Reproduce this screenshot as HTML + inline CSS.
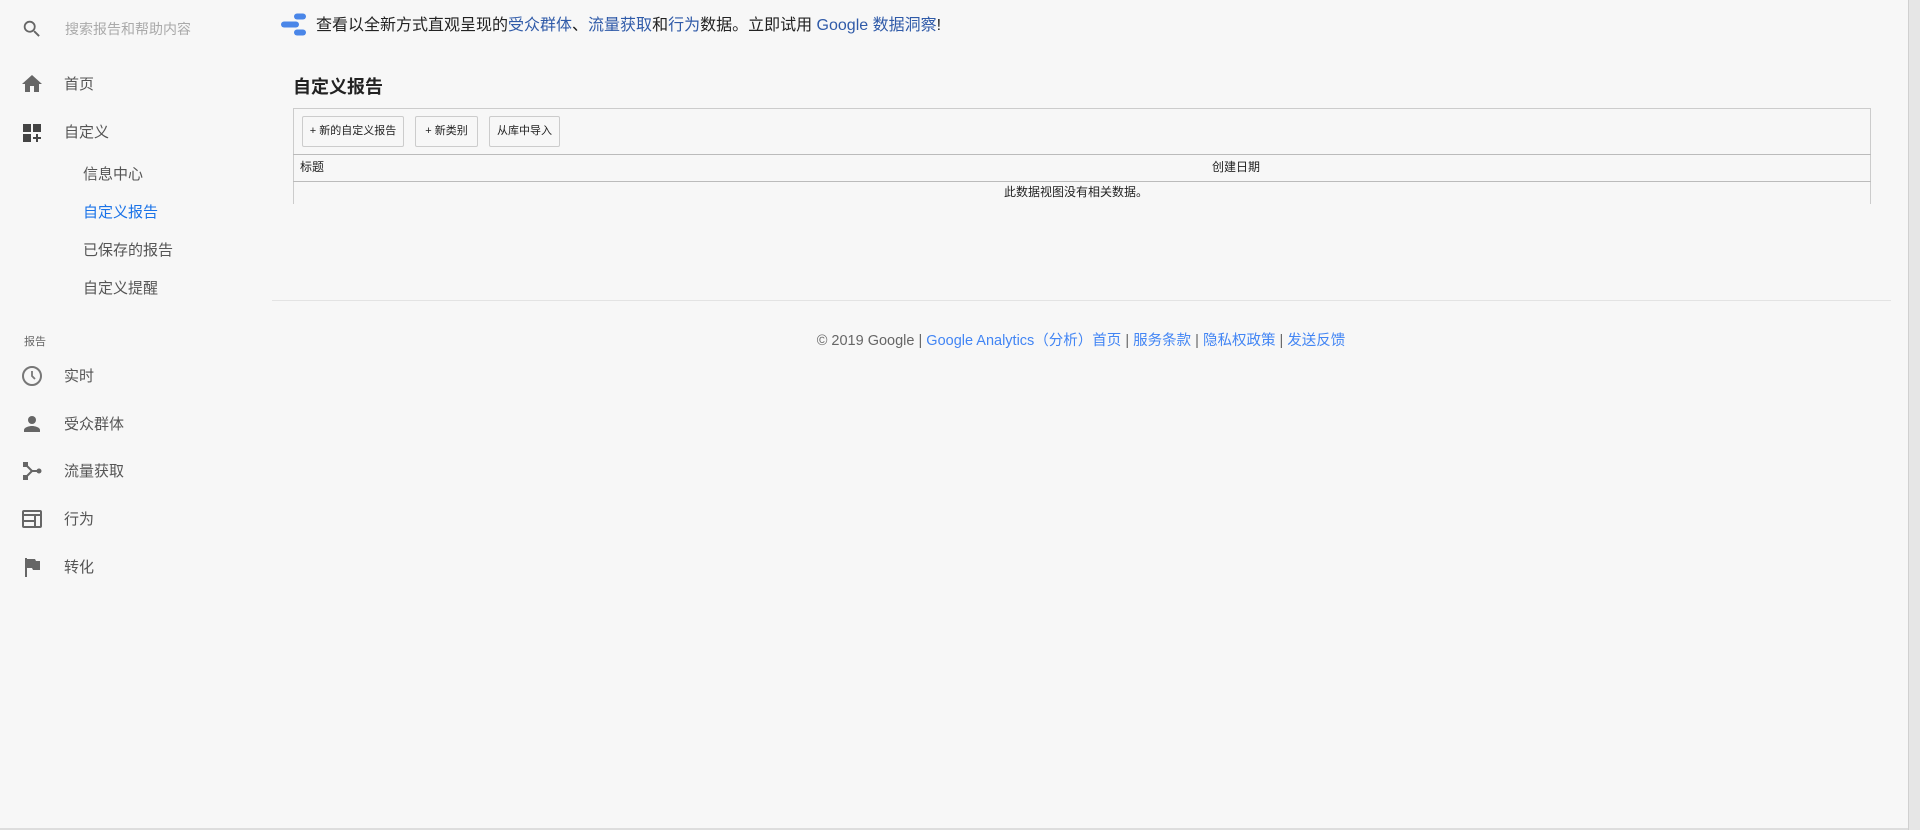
<!DOCTYPE html>
<html><head><meta charset="utf-8"><style>
*{margin:0;padding:0;box-sizing:border-box}
body{width:1920px;height:830px;background:#f7f7f7;font-family:"Liberation Sans","Noto Sans CJK SC",sans-serif;color:#222;position:relative;overflow:hidden}
.a{position:absolute;white-space:nowrap}
.nav{font-size:15px;color:#555;line-height:20px}
.ico{position:absolute}
a{color:#3367d6;text-decoration:none}
.btn{position:absolute;top:116px;height:31px;border:1px solid #ccc;border-radius:2px;background:#f7f7f7;font-size:11px;line-height:29px;text-align:center;color:#222}
</style></head><body>
<svg class="ico" style="left:21px;top:18px" width="22" height="22" viewBox="0 0 24 24"><path fill="#666" d="M15.5 14h-.79l-.28-.27A6.470 6.470 0 0016 9.5 6.5 6.5 0 109.5 16c1.61 0 3.09-.59 4.23-1.57l.27.28v.79l5 4.99L20.49 19l-4.99-5zm-6 0C7.01 14 5 11.99 5 9.5S7.01 5 9.5 5 14 7.01 14 9.5 11.99 14 9.5 14z"/></svg>
<div class="a" style="left:65px;top:19px;font-size:14px;color:#aaa;line-height:20px">搜索报告和帮助内容</div>

<svg class="ico" style="left:20px;top:72px" width="24" height="24" viewBox="0 0 24 24"><path fill="#666" d="M10 20v-6h4v6h5v-8h3L12 3 2 12h3v8z"/></svg>
<div class="a nav" style="left:64px;top:75px">首页</div>
<svg class="ico" style="left:20px;top:121px" width="24" height="24" viewBox="0 0 24 24"><path fill="#444" d="M3 3h8v8H3zM13 3h8v8h-8zM3 13h8v8H3z"/><path fill="#444" d="M16 13h2v3h3v2h-3v3h-2v-3h-3v-2h3z"/></svg>
<div class="a nav" style="left:64px;top:123px">自定义</div>
<div class="a nav" style="left:83px;top:165px">信息中心</div>
<div class="a nav" style="left:83px;top:203px;color:#1a73e8">自定义报告</div>
<div class="a nav" style="left:83px;top:241px">已保存的报告</div>
<div class="a nav" style="left:83px;top:279px">自定义提醒</div>
<div class="a" style="left:24px;top:333px;font-size:11px;color:#666">报告</div>

<svg class="ico" style="left:20px;top:364px" width="24" height="24" viewBox="0 0 24 24"><circle cx="12" cy="12" r="9" fill="none" stroke="#777" stroke-width="2"/><path d="M12 7v5l3 3" fill="none" stroke="#777" stroke-width="1.8"/></svg>
<div class="a nav" style="left:64px;top:367px">实时</div>
<svg class="ico" style="left:20px;top:412px" width="24" height="24" viewBox="0 0 24 24"><circle cx="12" cy="8" r="4" fill="#666"/><path fill="#666" d="M4 20v-2c0-2.7 5.3-4 8-4s8 1.3 8 4v2z"/></svg>
<div class="a nav" style="left:64px;top:415px">受众群体</div>
<svg class="ico" style="left:20px;top:459px" width="24" height="24" viewBox="0 0 24 24"><rect x="3" y="3" width="5" height="5" fill="#666"/><rect x="3" y="16" width="5" height="5" fill="#666"/><circle cx="19" cy="12" r="2.5" fill="#666"/><path d="M6 6l6 6h7M12 12l-6 6" fill="none" stroke="#666" stroke-width="2"/></svg>
<div class="a nav" style="left:64px;top:462px">流量获取</div>
<svg class="ico" style="left:20px;top:507px" width="24" height="24" viewBox="0 0 24 24"><rect x="3" y="4" width="18" height="16" rx="1" fill="none" stroke="#666" stroke-width="2"/><path d="M3 8h18M3 14h12M15 8v12" fill="none" stroke="#666" stroke-width="2"/></svg>
<div class="a nav" style="left:64px;top:510px">行为</div>
<svg class="ico" style="left:20px;top:555px" width="24" height="24" viewBox="0 0 24 24"><path fill="#666" d="M5 3h2v19H5zM7 4h8l1 2h4v9h-7l-1-2H7z"/></svg>
<div class="a nav" style="left:64px;top:558px">转化</div>

<svg class="ico" style="left:280px;top:12px" width="28" height="24" viewBox="0 0 28 24"><rect x="14" y="1.5" width="12" height="6" rx="3" fill="#4a86e8"/><rect x="1" y="9.5" width="18" height="6" rx="3" fill="#4a86e8"/><rect x="14" y="17.5" width="12" height="6" rx="3" fill="#4a86e8"/></svg>
<div class="a" style="left:316px;top:15px;font-size:16px;line-height:22px;color:#222">查看以全新方式直观呈现的<a style="color:#2f5aa8">受众群体</a>、<a style="color:#2f5aa8">流量获取</a>和<a style="color:#2f5aa8">行为</a>数据。立即试用 <a style="color:#2f5aa8">Google 数据洞察</a>!</div>

<div class="a" style="left:293px;top:73px;font-size:18px;font-weight:bold;color:#222">自定义报告</div>

<div class="a" style="left:293px;top:108px;width:1578px;height:96px;border:1px solid #ccc;border-bottom:none"></div>
<div class="a" style="left:293px;top:154px;width:1578px;height:1px;background:#bbb"></div>
<div class="a" style="left:293px;top:181px;width:1578px;height:1px;background:#bbb"></div>
<div class="btn" style="left:302px;width:102px">+ 新的自定义报告</div>
<div class="btn" style="left:415px;width:63px">+ 新类别</div>
<div class="btn" style="left:489px;width:71px">从库中导入</div>
<div class="a" style="left:300px;top:159px;font-size:12px;line-height:17px">标题</div>
<div class="a" style="left:1212px;top:159px;font-size:12px;line-height:17px">创建日期</div>
<div class="a" style="left:1004px;top:184px;font-size:12px;line-height:17px">此数据视图没有相关数据。</div>

<div class="a" style="left:272px;top:300px;width:1619px;height:1px;background:#e3e3e3"></div>
<div class="a" style="left:0;width:2162px;top:331px;text-align:center;font-size:14.5px;color:#666;line-height:20px">© 2019 Google | <a style="color:#4285f4">Google Analytics（分析）首页</a> | <a style="color:#4285f4">服务条款</a> | <a style="color:#4285f4">隐私权政策</a> | <a style="color:#4285f4">发送反馈</a></div>

<div class="a" style="left:1908px;top:0;width:12px;height:830px;background:#e6e6e6;border-left:1px solid #d0d0d0"></div>
<div class="a" style="left:0;top:828px;width:1908px;height:2px;background:#ddd"></div>
</body></html>
